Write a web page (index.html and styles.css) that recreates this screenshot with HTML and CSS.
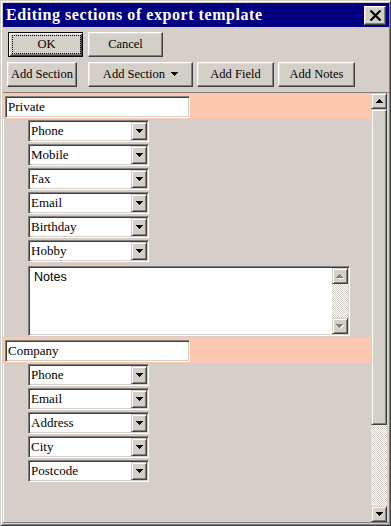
FILE: index.html
```html
<!DOCTYPE html>
<html lang="en">
<head>
  <meta charset="UTF-8" />
  <title>Editing sections of export template</title>
  <link rel="stylesheet" href="styles.css">
</head>
<body>
  <div class="window">
    <div class="titlebar">
      <span class="title">Editing sections of export template</span>
      <span class="close-btn">
        <svg width="13" height="11" viewBox="0 0 13 11"><path d="M1.5 0.5 L11.5 10.5 M11.5 0.5 L1.5 10.5" stroke="#000" stroke-width="2.2" fill="none"/></svg>
      </span>
    </div>

    <div class="toolbar">
      <button class="btn btn-default btn-ok"><span class="focus">OK</span></button>
      <button class="btn btn-cancel">Cancel</button>
    </div>

    <div class="toolbar">
      <button class="btn btn-section">Add Section</button>
      <button class="btn btn-section-menu">Add Section <svg class="caret" width="7" height="4"><path d="M0 0h7v1H0zM1 1h5v1H1zM2 2h3v1H2zM3 3h1v1H3z"/></svg></button>
      <button class="btn btn-field">Add Field</button>
      <button class="btn btn-notes">Add Notes</button>
    </div>

    <div class="pane">
      <div class="sections">
        <div class="section-head"><input class="section-name" value="Private"></div>
        <div class="field"><span class="field-value">Phone</span><span class="drop"><svg width="7" height="4"><path d="M0 0h7v1H0zM1 1h5v1H1zM2 2h3v1H2zM3 3h1v1H3z"/></svg></span></div>
        <div class="field"><span class="field-value">Mobile</span><span class="drop"><svg width="7" height="4"><path d="M0 0h7v1H0zM1 1h5v1H1zM2 2h3v1H2zM3 3h1v1H3z"/></svg></span></div>
        <div class="field"><span class="field-value">Fax</span><span class="drop"><svg width="7" height="4"><path d="M0 0h7v1H0zM1 1h5v1H1zM2 2h3v1H2zM3 3h1v1H3z"/></svg></span></div>
        <div class="field"><span class="field-value">Email</span><span class="drop"><svg width="7" height="4"><path d="M0 0h7v1H0zM1 1h5v1H1zM2 2h3v1H2zM3 3h1v1H3z"/></svg></span></div>
        <div class="field"><span class="field-value">Birthday</span><span class="drop"><svg width="7" height="4"><path d="M0 0h7v1H0zM1 1h5v1H1zM2 2h3v1H2zM3 3h1v1H3z"/></svg></span></div>
        <div class="field"><span class="field-value">Hobby</span><span class="drop"><svg width="7" height="4"><path d="M0 0h7v1H0zM1 1h5v1H1zM2 2h3v1H2zM3 3h1v1H3z"/></svg></span></div>
        <div class="notes">
          <div class="notes-text">Notes</div>
          <div class="notes-scroll">
            <span class="sb-btn">
              <svg width="8" height="5"><path fill="#fff" d="M4 1h1v1H4zM3 2h3v1H3zM2 3h5v1H2zM1 4h7v1H1z"/><path fill="#808080" d="M3 0h1v1H3zM2 1h3v1H2zM1 2h5v1H1zM0 3h7v1H0z"/></svg>
            </span>
            <span class="sb-track"></span>
            <span class="sb-btn">
              <svg width="8" height="5"><path fill="#fff" d="M1 1h7v1H1zM2 2h5v1H2zM3 3h3v1H3zM4 4h1v1H4z"/><path fill="#808080" d="M0 0h7v1H0zM1 1h5v1H1zM2 2h3v1H2zM3 3h1v1H3z"/></svg>
            </span>
          </div>
        </div>

        <div class="section-head"><input class="section-name" value="Company"></div>
        <div class="field"><span class="field-value">Phone</span><span class="drop"><svg width="7" height="4"><path d="M0 0h7v1H0zM1 1h5v1H1zM2 2h3v1H2zM3 3h1v1H3z"/></svg></span></div>
        <div class="field"><span class="field-value">Email</span><span class="drop"><svg width="7" height="4"><path d="M0 0h7v1H0zM1 1h5v1H1zM2 2h3v1H2zM3 3h1v1H3z"/></svg></span></div>
        <div class="field"><span class="field-value">Address</span><span class="drop"><svg width="7" height="4"><path d="M0 0h7v1H0zM1 1h5v1H1zM2 2h3v1H2zM3 3h1v1H3z"/></svg></span></div>
        <div class="field"><span class="field-value">City</span><span class="drop"><svg width="7" height="4"><path d="M0 0h7v1H0zM1 1h5v1H1zM2 2h3v1H2zM3 3h1v1H3z"/></svg></span></div>
        <div class="field"><span class="field-value">Postcode</span><span class="drop"><svg width="7" height="4"><path d="M0 0h7v1H0zM1 1h5v1H1zM2 2h3v1H2zM3 3h1v1H3z"/></svg></span></div>
      </div>

      <div class="vscroll">
        <span class="sb-btn"><svg width="7" height="4"><path d="M3 0h1v1H3zM2 1h3v1H2zM1 2h5v1H1zM0 3h7v1H0z"/></svg></span>
        <span class="sb-thumb"></span>
        <span class="sb-track"></span>
        <span class="sb-btn"><svg width="7" height="4"><path d="M0 0h7v1H0zM1 1h5v1H1zM2 2h3v1H2zM3 3h1v1H3z"/></svg></span>
      </div>
    </div>
  </div>
</body>
</html>
```

FILE: styles.css
```css
* {
  box-sizing: border-box;
}

body {
  margin: 0;
  background: #d6cfc9;
  font-family: "Liberation Serif", "Times New Roman", serif;
  color: #000;
}

.window {
  width: 391px;
  height: 526px;
  display: flex;
  flex-direction: column;
  padding: 2px 1px 2px 2px;
  border: 1px solid;
  border-color: #d4d0c8 #404040 #404040 #d4d0c8;
  box-shadow: inset 1px 1px #fff, inset -1px -1px #808080;
  background: #d6cfc9;
}

/* title bar */
.titlebar {
  height: 24px;
  flex-shrink: 0;
  display: flex;
  justify-content: space-between;
  align-items: flex-start;
  padding: 3px 3px 0 3px;
  background: #000080;
}

.title {
  color: #fff;
  font-weight: bold;
  font-size: 16px;
  letter-spacing: 0.55px;
  line-height: 18px;
}

.close-btn {
  width: 22px;
  height: 19px;
  display: flex;
  align-items: center;
  justify-content: center;
  background: #d4d0c8;
  border: 1px solid;
  border-color: #fff #404040 #404040 #fff;
  box-shadow: inset -1px -1px #808080, inset 1px 1px #dfdfdf;
}

/* buttons */
.toolbar {
  display: flex;
  flex-shrink: 0;
  margin-top: 5px;
}

.btn {
  height: 25px;
  margin: 0 0 0 4px;
  padding: 0;
  font-family: "Liberation Serif", "Times New Roman", serif;
  font-size: 12.5px;
  color: #000;
  background: #d4d0c8;
  border: 1px solid;
  border-color: #fff #404040 #404040 #fff;
  box-shadow: inset -1px -1px #808080, inset 1px 1px #dfdfdf;
}

.btn-default {
  border: 1px solid #000;
  box-shadow: inset 1px 1px #fff, inset -1px -1px #404040, inset 2px 2px #dfdfdf, inset -2px -2px #808080;
  padding: 2px 1px 2px 3px;
}

.focus {
  display: flex;
  align-items: center;
  justify-content: center;
  height: 100%;
  border: 1px dotted #000;
}

.btn-ok { width: 75px; margin-left: 5px; }
.btn-cancel { width: 75px; margin-left: 5px; }
.btn-section { width: 70px; }
.btn-section-menu { width: 105px; margin-left: 11px; }
.btn-field { width: 77px; }
.btn-notes { width: 77px; }

.caret {
  margin-left: 3px;
  vertical-align: 2px;
}

/* scrolling pane */
.pane {
  flex: 1;
  display: flex;
  min-height: 0;
  margin-top: 5px;
  padding-right: 2px;
  border-top: 1px solid #808080;
  border-bottom: 1px solid #808080;
}

.sections {
  flex: 1;
  overflow: hidden;
  box-shadow: inset 1px 0 #fff;
}

.section-head {
  height: 26px;
  padding: 3px 0 0 2px;
  background: #fcc8b0;
}

.section-name {
  display: block;
  width: 185px;
  height: 22px;
  margin: 0;
  padding: 0 2px;
  font-family: "Liberation Serif", "Times New Roman", serif;
  font-size: 13px;
  color: #000;
  background: #fff;
  border: 1px solid;
  border-color: #808080 #fff #fff #808080;
  box-shadow: inset 1px 1px #404040, inset -1px -1px #d4d0c8;
  outline: none;
}

.section-head + .field {
  margin-top: 1px;
}

.field {
  display: flex;
  width: 121px;
  height: 22px;
  margin: 0 0 2px 25px;
  padding: 1px;
  background: #fff;
  border: 1px solid;
  border-color: #808080 #fff #fff #808080;
  box-shadow: inset 1px 1px #404040, inset -1px -1px #d4d0c8;
}

.field-value {
  flex: 1;
  padding-left: 1px;
  font-size: 13px;
  line-height: 18px;
}

.drop,
.sb-btn,
.sb-thumb {
  background: #d4d0c8;
  border: 1px solid;
  border-color: #d4d0c8 #404040 #404040 #d4d0c8;
  box-shadow: inset 1px 1px #fff, inset -1px -1px #808080;
}

.drop {
  width: 16px;
  height: 18px;
  display: flex;
  align-items: center;
  justify-content: center;
}

.drop svg {
  margin-left: 1px;
}

/* notes box */
.notes {
  display: flex;
  width: 322px;
  height: 70px;
  margin: 4px 0 1px 25px;
  padding: 1px;
  background: #fff;
  border: 1px solid;
  border-color: #808080 #fff #fff #808080;
  box-shadow: inset 1px 1px #404040, inset -1px -1px #d4d0c8;
}

.notes-text {
  flex: 1;
  padding: 2px 4px;
  font-family: "Liberation Sans", Arial, sans-serif;
  font-size: 12.5px;
}

.notes-scroll,
.vscroll {
  width: 16px;
  display: flex;
  flex-direction: column;
}

.sb-btn {
  height: 16px;
  flex-shrink: 0;
  display: flex;
  align-items: center;
  justify-content: center;
}

.sb-track {
  flex: 1;
  background: repeating-conic-gradient(#fff 0 25%, #d4d0c8 0 50%) 0 0 / 2px 2px;
}

.sb-thumb {
  height: 316px;
  flex-shrink: 0;
}
```
